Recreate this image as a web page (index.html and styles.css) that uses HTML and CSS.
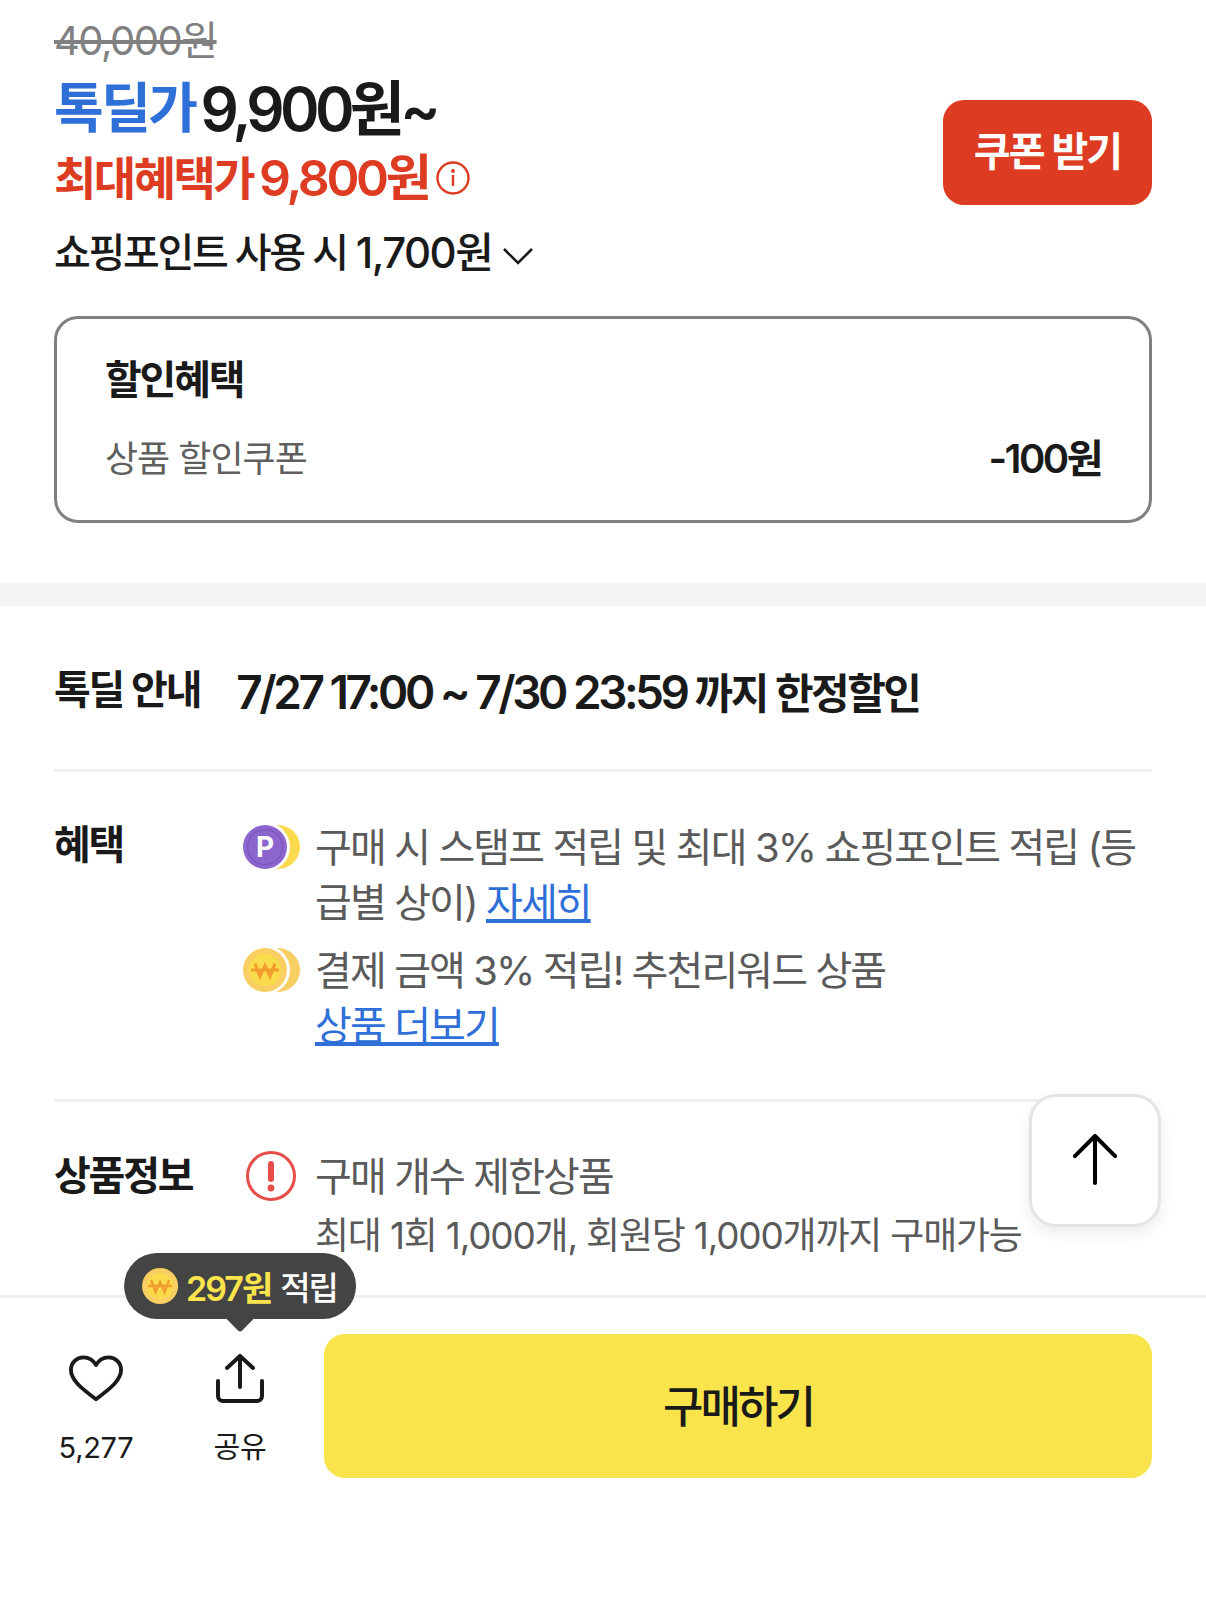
FILE: index.html
```html
<!DOCTYPE html>
<html lang="ko">
<head>
  <meta charset="UTF-8">
  <meta name="viewport" content="width=device-width, initial-scale=1.0">
  <title>상품 상세</title>
  <link rel="stylesheet" href="styles.css">
</head>
<body>
  <div class="page">
    <div class="content">
      <section class="price-area">
        <div class="price-head">
          <div class="prices">
            <div class="price-old">40,000원</div>
            <div class="price-deal"><span class="deal-label">톡딜가</span><span class="deal-amount">9,900원~</span></div>
            <div class="price-max">
              <span class="max-label">최대혜택가</span>
              <span class="max-amount">9,800원</span>
              <svg class="info-icon" viewBox="0 0 36 36" fill="none">
                <circle cx="18" cy="18" r="15.5" stroke="#dd3b22" stroke-width="2.4"/>
                <circle cx="18" cy="11" r="1.9" fill="#dd3b22"/>
                <rect x="16.8" y="15" width="2.4" height="11" fill="#dd3b22"/>
              </svg>
            </div>
            <div class="price-point">
              <span class="point-label">쇼핑포인트 사용 시</span>
              <span class="point-amount">1,700원</span>
              <svg class="chevron" viewBox="0 0 32 20" fill="none">
                <path d="M2 3l14 14L30 3" stroke="#1a1a1a" stroke-width="2.6"/>
              </svg>
            </div>
          </div>
          <button class="coupon-btn">쿠폰 받기</button>
        </div>
        <div class="discount-box">
          <div class="discount-title">할인혜택</div>
          <div class="discount-row">
            <span class="discount-name">상품 할인쿠폰</span>
            <span class="discount-value">-100원</span>
          </div>
        </div>
      </section>

      <div class="band"></div>

      <section class="info-area">
        <div class="deal-row">
          <div class="row-label">톡딜 안내</div>
          <div class="deal-date">7/27 17:00 ~ 7/30 23:59 <span class="deal-until">까지 한정할인</span></div>
        </div>

        <div class="row benefit-row">
          <div class="row-label">혜택</div>
          <div class="benefit-list">
            <div class="benefit">
              <svg class="coin" viewBox="0 0 57 45">
                <circle cx="35" cy="22.5" r="22" fill="#fbdb4d"/>
                <circle cx="22.5" cy="22.5" r="24.5" fill="#fff"/>
                <circle cx="22" cy="22.5" r="22" fill="#8c66cc"/>
                <circle cx="22" cy="22.5" r="17.5" fill="none" stroke="#7d58c0" stroke-width="1.5"/>
                <text x="22" y="32" class="coin-p">P</text>
              </svg>
              <div class="benefit-text">구매 시 스탬프 적립 및 최대 3% 쇼핑포인트 적립 (등급별 상이) <a class="more-link">자세히</a></div>
            </div>
            <div class="benefit">
              <svg class="coin" viewBox="0 0 57 45">
                <circle cx="35" cy="22.5" r="22" fill="#f9cf63"/>
                <circle cx="22.5" cy="22.5" r="24.5" fill="#fff"/>
                <circle cx="22" cy="22.5" r="22" fill="#f9cf63"/>
                <circle cx="22" cy="22.5" r="16" fill="#f9dc4b"/>
                <path d="M8 22.5h28M12 16l5 13 5-11 5 11 5-13" fill="none" stroke="#f39c2e" stroke-width="3"/>
              </svg>
              <div class="benefit-text">결제 금액 3% 적립! 추천리워드 상품<br><a class="more-link">상품 더보기</a></div>
            </div>
          </div>
        </div>

        <div class="row product-row">
          <div class="row-label">상품정보</div>
          <div class="benefit">
            <svg class="coin" viewBox="0 0 57 50" fill="none">
              <circle cx="28" cy="25" r="23.5" stroke="#e84d4a" stroke-width="3"/>
              <rect x="25" y="10" width="6" height="21" rx="3" fill="#e84d4a"/>
              <circle cx="28" cy="37" r="3.4" fill="#e84d4a"/>
            </svg>
            <div>
              <div class="limit-title">구매 개수 제한상품</div>
              <div class="limit-desc">최대 1회 1,000개, 회원당 1,000개까지 구매가능</div>
            </div>
          </div>
        </div>
      </section>
    </div>

    <button class="top-btn">
      <svg viewBox="0 0 48 54" fill="none">
        <path d="M24 3v49M3 24L24 3l21 21" stroke="#000" stroke-width="4.2" stroke-linecap="round" stroke-linejoin="round"/>
      </svg>
    </button>

    <div class="bottom-bar">
      <div class="action">
        <svg class="action-icon" viewBox="0 0 56 50" fill="none">
          <path d="M28 46C12 34 2 26 2 15.500C2 8 8 2.500 15 2.500c5.500 0 10 2.500 13 8 3-5.500 7.500-8 13-8 7 0 13 5.500 13 13C54 26 44 34 28 46z" stroke="#1a1a1a" stroke-width="4" stroke-linejoin="round"/>
        </svg>
        <span class="action-text">5,277</span>
      </div>
      <div class="action">
        <svg class="action-icon" viewBox="0 0 50 50" fill="none">
          <path d="M25 33V3M12 14L25 2l13 12M3 27v15a5 5 0 0 0 5 5h34a5 5 0 0 0 5-5V27" stroke="#1a1a1a" stroke-width="4" stroke-linecap="round" stroke-linejoin="round"/>
        </svg>
        <span class="action-text">공유</span>
        <div class="tip">
          <svg class="tip-coin" viewBox="0 0 36 36">
            <circle cx="18" cy="18" r="18" fill="#f9cf63"/>
            <circle cx="18" cy="18" r="13" fill="#f9dc4b"/>
            <path d="M6 18h24M9 12l4.500 12 4.500-10 4.500 10L27 12" fill="none" stroke="#f39c2e" stroke-width="2.500"/>
          </svg>
          <span class="tip-amount">297원</span>
          <span class="tip-label">적립</span>
        </div>
      </div>
      <button class="buy-btn">구매하기</button>
    </div>
  </div>
</body>
</html>
```

FILE: styles.css
```css
* {
  box-sizing: border-box;
}

body {
  margin: 0;
  background-color: #fff;
  color: #1a1a1a;
  font-family: Inter, "Noto Sans CJK KR", sans-serif;
}

.page {
  position: relative;
  width: 1206px;
  height: 1613px;
  overflow: hidden;
}

.content {
  height: 1295px;
  overflow: hidden;
}

.price-area {
  padding: 18px 54px 60px;
}

.price-head {
  display: flex;
  justify-content: space-between;
  align-items: center;
}

.price-old {
  color: #808080;
  font-size: 40px;
  line-height: 46px;
  letter-spacing: -1.5px;
  text-decoration: line-through;
}

.price-deal {
  display: flex;
  align-items: center;
  gap: 5px;
  margin: 10px 0 1px;
  line-height: 70px;
  font-weight: 600;
}

.deal-label {
  color: #2f6fd8;
  font-size: 54px;
  letter-spacing: -2.5px;
}

.deal-amount {
  font-size: 60px;
  letter-spacing: -4.7px;
}

.price-max {
  display: flex;
  align-items: center;
  gap: 6px;
  color: #dd3b22;
  line-height: 66px;
  font-weight: 600;
}

.max-label {
  font-size: 46px;
  letter-spacing: -2.5px;
}

.max-amount {
  font-size: 50px;
  letter-spacing: -3.3px;
}

.info-icon {
  width: 36px;
  height: 36px;
}

.price-point {
  display: flex;
  align-items: center;
  gap: 9px;
  margin-top: 12px;
  line-height: 60px;
  font-weight: 500;
}

.point-label {
  font-size: 40px;
  letter-spacing: -2.3px;
}

.point-amount {
  font-size: 42px;
  letter-spacing: -1.5px;
}

.chevron {
  width: 32px;
  height: 20px;
  margin: 6px 0 0 1px;
}

.coupon-btn {
  width: 209px;
  height: 105px;
  margin-top: 3px;
  padding: 0 0 6px;
  border: none;
  border-radius: 21px;
  background-color: #dd3b22;
  color: #fff;
  font-family: inherit;
  font-size: 40px;
  font-weight: 600;
  letter-spacing: -2px;
}

.discount-box {
  height: 207px;
  margin-top: 33px;
  padding: 34px 48px 0;
  border: 3px solid #808080;
  border-radius: 24px;
}

.discount-title {
  font-size: 40px;
  line-height: 54px;
  font-weight: 600;
  letter-spacing: -2.2px;
}

.discount-row {
  display: flex;
  justify-content: space-between;
  align-items: center;
  margin-top: 28px;
}

.discount-name {
  color: #5f5f5f;
  font-size: 36px;
  line-height: 48px;
  letter-spacing: -1px;
}

.discount-value {
  font-size: 40px;
  line-height: 48px;
  font-weight: 600;
  letter-spacing: -2.5px;
}

.band {
  height: 23px;
  background-color: #f5f5f5;
}

.info-area {
  padding: 0 54px;
}

.deal-row {
  display: flex;
  align-items: center;
  gap: 36px;
  height: 163px;
  padding-top: 5px;
}

.row-label {
  font-size: 40px;
  line-height: 54px;
  font-weight: 600;
  letter-spacing: -2.2px;
}

.deal-date {
  font-size: 46px;
  font-weight: 600;
  letter-spacing: -3.5px;
}

.deal-until {
  font-size: 42px;
  letter-spacing: -2.5px;
}

.row {
  display: grid;
  grid-template-columns: 189px 1fr;
  border-top: 3px solid #f0f0f0;
}

.benefit-row {
  height: 330px;
  padding-top: 46px;
}

.product-row {
  padding-top: 47px;
}

.benefit-list {
  display: flex;
  flex-direction: column;
  gap: 13px;
  margin-top: 2px;
}

.benefit {
  display: flex;
  gap: 15px;
}

.coin {
  flex-shrink: 0;
  width: 57px;
  height: 50px;
  margin-top: 2px;
}

.benefit-text,
.limit-title {
  color: #5a5a5a;
  font-size: 40px;
  line-height: 55px;
  letter-spacing: -1.9px;
}

.coin-p {
  fill: #fff;
  font-size: 28px;
  font-weight: 700;
  text-anchor: middle;
}

.more-link {
  color: #2f6fd8;
  text-decoration: underline;
}

.limit-desc {
  margin-top: 4px;
  color: #5a5a5a;
  font-size: 37px;
  line-height: 55px;
  letter-spacing: -1.2px;
}

.top-btn {
  position: absolute;
  top: 1094px;
  left: 1029px;
  width: 132px;
  height: 133px;
  padding: 0 0 4px;
  border: 3px solid #e4e4e4;
  border-radius: 27px;
  background-color: #fff;
  box-shadow: 0 6px 14px rgba(0, 0, 0, 0.08);
}

.top-btn svg {
  display: block;
  width: 46px;
  height: 52px;
  margin: 0 auto;
}

.bottom-bar {
  display: flex;
  align-items: flex-start;
  height: 318px;
  padding: 36px 54px 0 36px;
  border-top: 3px solid #f0f0f0;
  background-color: #fff;
}

.action {
  position: relative;
  display: flex;
  flex-direction: column;
  align-items: center;
  width: 120px;
  margin-right: 24px;
  padding-top: 20px;
}

.action-icon {
  width: 54px;
  height: 50px;
}

.action-text {
  margin-top: 24px;
  font-size: 29px;
  line-height: 40px;
  letter-spacing: -0.3px;
}

.tip {
  position: absolute;
  top: -81px;
  left: 50%;
  display: flex;
  align-items: center;
  gap: 8px;
  height: 66px;
  padding: 0 19px 0 18px;
  transform: translateX(-50%);
  border-radius: 33px;
  background-color: #444;
  color: #fff;
  font-size: 34px;
  font-weight: 600;
  letter-spacing: -2px;
  white-space: nowrap;
}

.tip::after {
  content: "";
  position: absolute;
  left: 50%;
  bottom: -9px;
  width: 22px;
  height: 22px;
  transform: translateX(-50%) rotate(45deg);
  border-radius: 3px;
  background-color: #444;
}

.tip-coin {
  width: 36px;
  height: 36px;
}

.tip-amount {
  color: #fae44c;
}

.tip-label {
  margin-left: 1px;
  font-size: 33px;
  font-weight: 500;
}

.buy-btn {
  flex: 1;
  height: 144px;
  padding: 0 0 4px;
  border: none;
  border-radius: 21px;
  background-color: #fae44c;
  color: #1a1a1a;
  font-family: inherit;
  font-size: 44px;
  font-weight: 500;
  letter-spacing: -3px;
}
```
